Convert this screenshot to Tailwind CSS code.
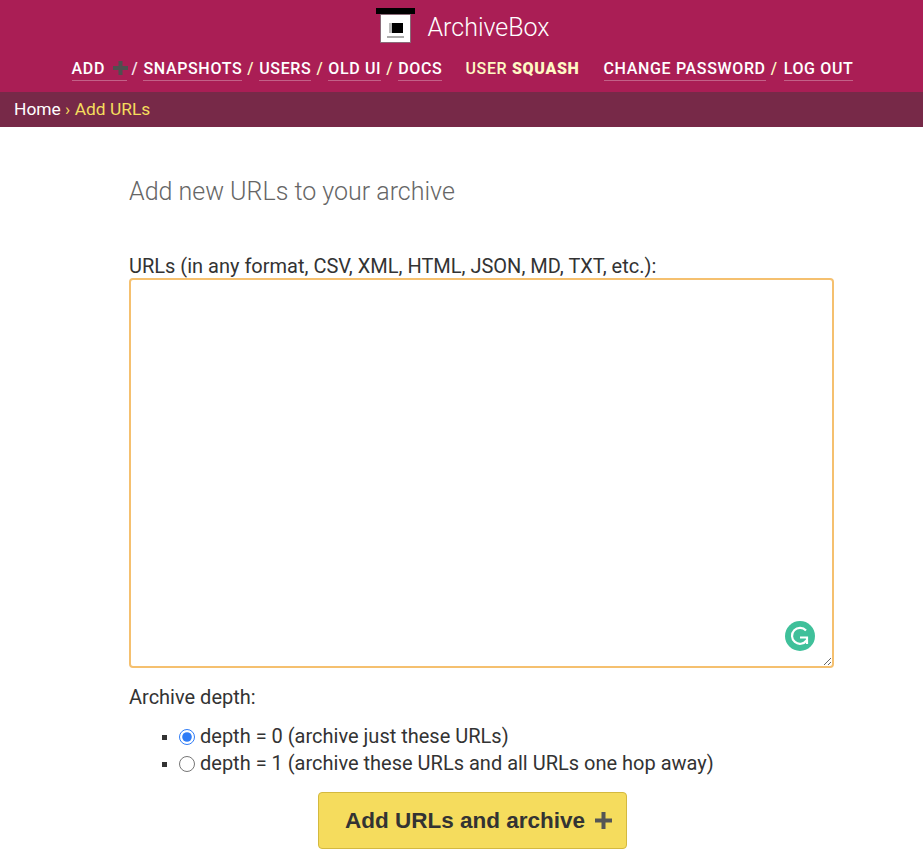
<!DOCTYPE html>
<html lang="en">

<head>
    <meta charset="UTF-8">
    <meta name="viewport" content="width=device-width, initial-scale=1.0">
    <title>Add URLs | ArchiveBox</title>
    <script src="https://cdn.jsdelivr.net/npm/@tailwindcss/browser@4"></script>
</head>

<body class="bg-white min-h-screen font-['Roboto',sans-serif] text-[#333] overflow-hidden">
    <!-- header -->
    <div class="bg-[#aa1e55] h-[92px] text-white">
        <div class="h-[51px] flex justify-center items-start gap-[12px] pt-[8px] pl-[3px]">
            <div class="w-[39px] flex flex-col items-center">
                <div class="w-[39px] h-[6px] bg-black"></div>
                <div class="w-[31px] h-[29px] bg-white border border-[#8a6a78] flex flex-col items-center pt-[8px]">
                    <div class="w-[14px] h-[10px] bg-black border-l-[3px] border-[#bbb]"></div>
                    <div class="w-[17px] h-[2px] bg-[#aaa] mt-[3px]"></div>
                </div>
            </div>
            <div class="text-[25px] font-light leading-[40px]">ArchiveBox</div>
        </div>
        <div class="flex justify-center text-[16px] leading-[20px] tracking-[0.65px] uppercase font-medium pt-[8px] pl-[2px] text-[#fff8c4]">
            <a class="text-white border-b border-white/30 pb-[1px] h-[22px] w-[55px] flex items-start" href="#">Add
                <svg class="ml-[8px] mt-[2px] shrink-0" width="15" height="14" viewBox="0 0 15 14" fill="#4f4f4f">
                    <path d="M5.5 0H9.5V5H15V9H9.5V14H5.5V9H0V5H5.5Z" />
                </svg>
            </a>
            <span class="mx-[5px] text-white/90">/</span>
            <a class="text-white border-b border-white/30 pb-[1px] h-[22px]" href="#">Snapshots</a>
            <span class="mx-[5px]">/</span>
            <a class="text-white border-b border-white/30 pb-[1px] h-[22px]" href="#">Users</a>
            <span class="mx-[5px]">/</span>
            <a class="text-white border-b border-white/30 pb-[1px] h-[22px]" href="#">Old UI</a>
            <span class="mx-[5px]">/</span>
            <a class="text-white border-b border-white/30 pb-[1px] h-[22px]" href="#">Docs</a>
            <span class="ml-[23px] mr-[24px]">User <strong class="font-black">squash</strong></span>
            <a class="text-white border-b border-white/30 pb-[1px] h-[22px]" href="#">Change password</a>
            <span class="ml-[5px] mr-[6px]">/</span>
            <a class="text-white border-b border-white/30 pb-[1px] h-[22px]" href="#">Log out</a>
        </div>
    </div>

    <!-- breadcrumbs -->
    <div class="bg-[#772948] h-[35px] pl-[14px] text-[17.4px] leading-[35px] text-[#f5dd5d]">
        <a class="text-white" href="#">Home</a> › Add URLs
    </div>

    <!-- content -->
    <div class="pl-[129px] w-[834px]">
        <h1 class="text-[25px] font-light text-[#666] leading-[30px] mt-[50px]">Add new URLs to your archive</h1>

        <form>
            <label class="block text-[20px] leading-[22px] mt-[48px] mb-[1px]" for="id_url">URLs (in any format, CSV, XML, HTML, JSON, MD, TXT, etc.):</label>
            <div class="relative h-[390px]">
                <textarea id="id_url" class="block w-full h-full bg-white border-2 border-[#f5c06f] rounded-[4px] outline-none"></textarea>
                <div class="absolute right-[19px] bottom-[17px] w-[30px] h-[30px] rounded-full bg-[#3fc09a] flex items-center justify-center">
                    <svg width="22" height="22" viewBox="0 0 22 22" fill="none" stroke="white" stroke-width="2.2">
                        <path d="M17 5.5A8 8 0 1 0 17.5 15.5" />
                        <path d="M11 12.5H18V19" />
                    </svg>
                </div>
            </div>

            <div class="text-[20px] leading-[22px] mt-[18px]">Archive depth:</div>
            <ul class="list-[square] pl-[50px] mt-[15px] text-[20px] leading-[27px] marker:text-[16px]">
                <li><label><input type="radio" name="depth" checked class="w-[16px] h-[16px] mr-[5px] ml-0 align-[-2px] accent-[#2f7cf6]">depth = 0 (archive just these URLs)</label></li>
                <li><label><input type="radio" name="depth" class="w-[16px] h-[16px] mr-[5px] ml-0 align-[-2px]">depth = 1 (archive these URLs and all URLs one hop away)</label></li>
            </ul>

            <div class="flex justify-center mt-[15px] pr-[18px]">
                <button type="button" class="w-[309px] h-[57px] bg-[#f5dc5d] border border-[#d4b93f] rounded-[4px] font-['Liberation_Sans',sans-serif] font-bold text-[22.5px] text-[#333] flex items-center pl-[26px]">Add URLs and archive
                    <svg class="ml-[10px]" width="17" height="17" viewBox="0 0 17 17" fill="#555">
                        <path d="M6.5 0H10.5V6.5H17V10.5H10.5V17H6.5V10.5H0V6.5H6.5Z" />
                    </svg>
                </button>
            </div>
        </form>
    </div>
</body>

</html>
